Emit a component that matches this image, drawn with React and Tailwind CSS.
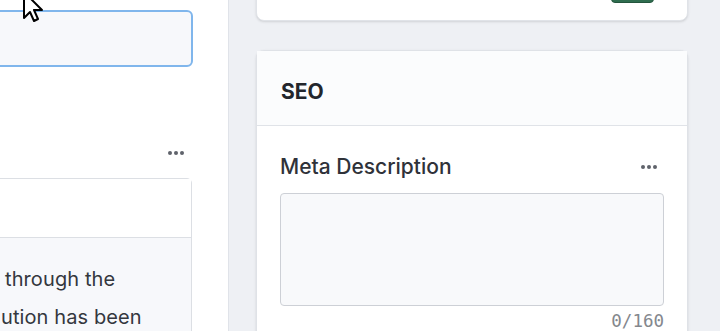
import React from "react";

function Dots() {
  return (
    <div className="flex items-center gap-[2px]">
      <span className="h-[4px] w-[4px] rounded-full bg-[#5f636b]" />
      <span className="h-[4px] w-[4px] rounded-full bg-[#5f636b]" />
      <span className="h-[4px] w-[4px] rounded-full bg-[#5f636b]" />
    </div>
  );
}

export default function App() {
  return (
    <div className="relative flex h-[331px] w-[720px] overflow-hidden bg-[#eef0f4] font-['Inter','Noto_Sans',sans-serif] text-[#2b2e35]">
      {/* left editor column, cropped on its left side */}
      <div className="w-[229px] shrink-0 overflow-hidden border-r border-[#e0e3e9] bg-white">
        <div className="ml-[-40px] w-[233px] pt-[10px]">
          <div className="h-[57px] rounded-[6px] border-2 border-[#80b6ec] bg-[#f7f8fb]" />

          <div className="mt-[76px] flex h-[20px] items-center justify-end pr-[9px]">
            <Dots />
          </div>

          <div className="mr-[1px] mt-[15px] rounded-tr-[5px] border border-[#dcdfe4]">
            <div className="h-[58px] bg-white" />
            <div className="border-t border-[#dcdfe4] bg-[#f7f8fb] pb-[20px] pl-[40px] pt-[22px] text-[20px] leading-[38px] tracking-[0.1px] text-[#34373e]">
              <div className="whitespace-nowrap pl-[4px]">through the</div>
              <div className="whitespace-nowrap">ution has been</div>
            </div>
          </div>
        </div>
      </div>

      {/* right sidebar */}
      <div className="flex-1 pl-[27px] pr-[32px]">
        <div className="mt-[-20px] flex h-[41px] items-end justify-end rounded-lg border border-[#e0e3e8] bg-white pb-[17px] pr-[33px] shadow-sm">
          <div className="h-[30px] w-[43px] rounded-[4px] border border-[#24553d] bg-[#2f6d4f]" />
        </div>

        <div className="mt-[29px] rounded-lg border border-[#dfe2e7] bg-white pb-[30px] shadow-sm">
          <div className="flex h-[75px] items-center border-b border-[#e0e3e8] bg-[#fbfcfd] px-[24px] pt-[7px]">
            <h2 className="text-[21px] font-bold text-[#23262c]">SEO</h2>
          </div>
          <div className="px-[23px] pt-[27px]">
            <div className="flex h-[28px] items-center justify-between">
              <span className="text-[21px] font-medium leading-[28px] text-[#2f3239]">Meta Description</span>
              <div className="mr-[7px]">
                <Dots />
              </div>
            </div>
            <div className="mt-[12px] h-[113px] rounded-[4px] border border-[#cdd0d6] bg-[#f8f9fb]" />
            <div className="mt-[5px] text-right font-['DejaVu_Sans_Mono',monospace] text-[17.5px] font-medium leading-[20px] text-[#84878d]">
              0/160
            </div>
          </div>
        </div>
      </div>

      {/* mouse pointer */}
      <svg
        className="absolute left-[22px] top-[-10px]"
        width="26"
        height="36"
        viewBox="0 0 26 36"
      >
        <path
          d="M2 2 L2 28 L8 22 L12 31 L16 29 L12 20 L20 20 Z"
          fill="#ffffff"
          stroke="#000000"
          strokeWidth="2"
          strokeLinejoin="round"
        />
      </svg>
    </div>
  );
}
